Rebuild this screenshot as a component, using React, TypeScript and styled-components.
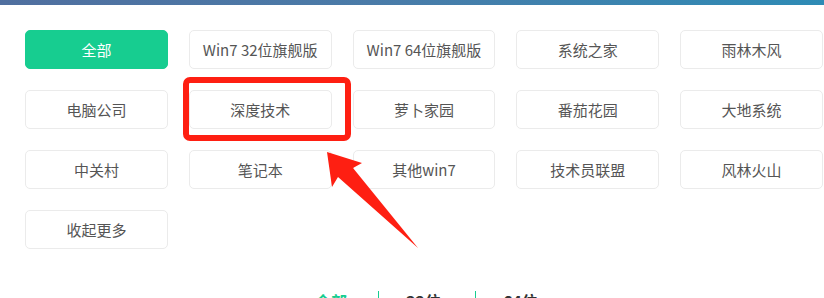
import styled, { createGlobalStyle } from 'styled-components'

const GlobalStyle = createGlobalStyle`
  html, body {
    margin: 0;
    padding: 0;
    background: #fff;
  }
  body {
    font-family: "Noto Sans CJK SC", "Noto Sans", sans-serif;
    overflow: hidden;
  }
`

const Page = styled.div`
  position: relative;
  width: 824px;
  height: 298px;
  overflow: hidden;
`

const TopBar = styled.div`
  height: 5px;
  background: linear-gradient(90deg, #506f9f 0%, #4a7ba8 45%, #2e8bb5 100%);
`

const Filters = styled.div`
  display: grid;
  grid-template-columns: repeat(5, 1fr);
  grid-auto-rows: 39px;
  column-gap: 21px;
  row-gap: 21px;
  padding: 25px 1px 0 25px;
`

const Chip = styled.div<{ $active?: boolean }>`
  display: flex;
  align-items: center;
  justify-content: center;
  box-sizing: border-box;
  border-radius: 5px;
  border: 1px solid ${(p) => (p.$active ? '#17cd90' : '#ebebeb')};
  background: ${(p) => (p.$active ? '#17cd90' : '#fff')};
  color: ${(p) => (p.$active ? '#fff' : '#555')};
  font-size: 15px;
  line-height: 1;
  white-space: nowrap;
`

const Tabs = styled.div`
  display: flex;
  margin-top: 42px;
  padding-left: 285px;
`

const Tab = styled.div<{ $active?: boolean; $first?: boolean }>`
  padding: 0 ${(p) => (p.$first ? '31px' : '34px')} 0 ${(p) => (p.$first ? '30px' : '27px')};
  border-left: ${(p) => (p.$first ? 'none' : '1px solid #17cd90')};
  color: ${(p) => (p.$active ? '#17cd90' : '#333')};
  font-size: 16px;
  font-weight: 700;
  line-height: 20px;
`

const Overlay = styled.svg`
  position: absolute;
  left: 0;
  top: 0;
  pointer-events: none;
`

const items = [
  'Win7 32位旗舰版',
  'Win7 64位旗舰版',
  '系统之家',
  '雨林木风',
  '电脑公司',
  '深度技术',
  '萝卜家园',
  '番茄花园',
  '大地系统',
  '中关村',
  '笔记本',
  '其他win7',
  '技术员联盟',
  '风林火山',
  '收起更多',
]

const App = () => {
  return (
    <Page>
      <GlobalStyle />
      <TopBar />
      <Filters>
        <Chip $active>全部</Chip>
        {items.map((name) => (
          <Chip key={name}>{name}</Chip>
        ))}
      </Filters>
      <Tabs>
        <Tab $active $first>
          全部
        </Tab>
        <Tab>32位</Tab>
        <Tab>64位</Tab>
      </Tabs>
      <Overlay width="824" height="298" viewBox="0 0 824 298">
        <rect x="186" y="80" width="162" height="58" rx="4" fill="none" stroke="#fe1f12" strokeWidth="6" />
        <polygon points="327,152 362,163 353,168 418,248 338,177 332,187" fill="#fe1f12" />
      </Overlay>
    </Page>
  )
}

export default App
